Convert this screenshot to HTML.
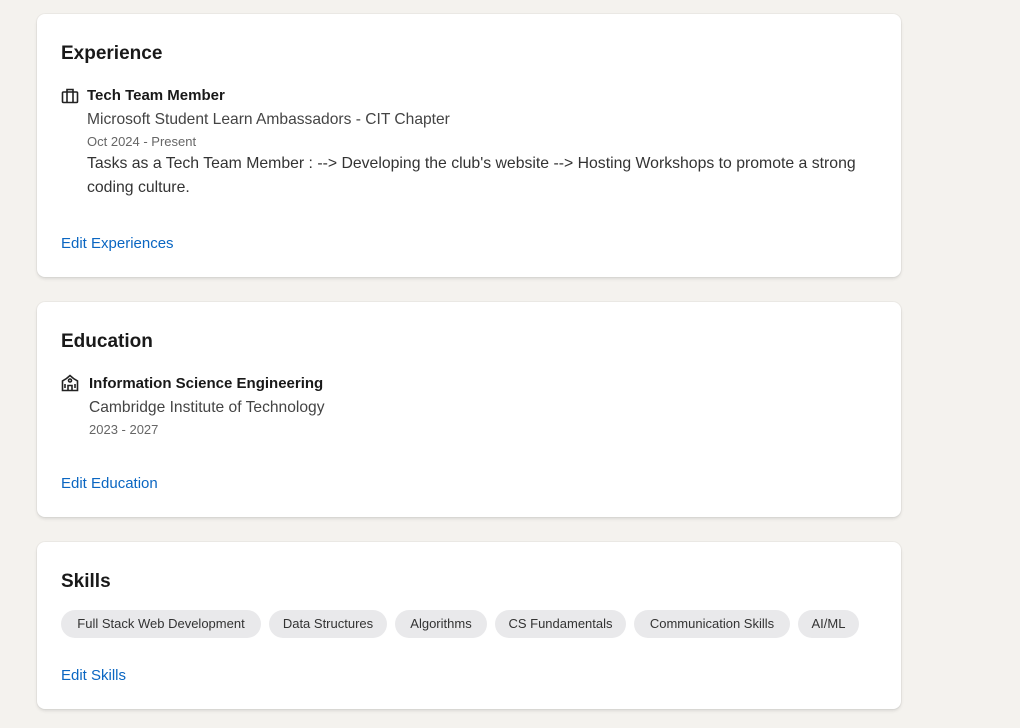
<!DOCTYPE html>
<html><head><meta charset="utf-8"><style>
*{margin:0;padding:0;box-sizing:border-box}
body{width:1020px;height:728px;background:#f4f2ee;font-family:"Liberation Sans",sans-serif;position:relative;overflow:hidden;color:#1d1d1d}
.card{position:absolute;left:37px;width:864px;background:#fff;border-radius:8px;box-shadow:0 0 0 1px rgba(0,0,0,.03),0 2px 3px rgba(0,0,0,.1)}
.a{position:absolute;white-space:nowrap}
h2{font-size:19px;font-weight:bold;color:#191919}
.t{font-size:15px;font-weight:bold;color:#191919}
.s{font-size:15.6px;color:#444}
.d{font-size:13px;color:#666}
.p{font-size:15.8px;color:#333}
.l{font-size:15px;color:#0a66c2}
.chip{position:absolute;top:68px;height:28px;border-radius:14px;background:#e9e9eb;font-size:13px;color:#333;line-height:28px;text-align:center}
svg{position:absolute}
</style></head><body>
<div class="card" style="top:14px;height:263px">
<h2 class="a" style="left:24px;top:29px">Experience</h2>
<svg style="left:24px;top:74px" width="18" height="16" viewBox="0 0 18 16" fill="none" stroke="#222" stroke-width="1.6"><rect x="1.5" y="4" width="15" height="10.5" rx="1"/><path d="M6 4V1.5h6V4M6 4v10.5M12 4v10.5"/></svg>
<div class="a t" style="left:50px;top:73px">Tech Team Member</div>
<div class="a s" style="left:50px;top:97px">Microsoft Student Learn Ambassadors - CIT Chapter</div>
<div class="a d" style="left:50px;top:120px">Oct 2024 - Present</div>
<div class="a p" style="left:50px;top:141px">Tasks as a Tech Team Member : --&gt; Developing the club's website --&gt; Hosting Workshops to promote a strong</div>
<div class="a p" style="left:50px;top:165px">coding culture.</div>
<div class="a l" style="left:24px;top:221px">Edit Experiences</div>
</div>
<div class="card" style="top:302px;height:215px">
<h2 class="a" style="left:24px;top:29px">Education</h2>
<svg style="left:24px;top:72px" width="18" height="18" viewBox="0 0 18 18" fill="none" stroke="#222" stroke-width="1.6"><path d="M1.5 16.5V7l4-2.5L9 1.5l3.5 3L16.5 7v9.5z"/><circle cx="9" cy="6.5" r="1.5"/><path d="M7 16.5v-5h4v5M4 10v4M14 10v4"/></svg>
<div class="a t" style="left:52px;top:73px">Information Science Engineering</div>
<div class="a s" style="left:52px;top:97px">Cambridge Institute of Technology</div>
<div class="a d" style="left:52px;top:120px">2023 - 2027</div>
<div class="a l" style="left:24px;top:173px">Edit Education</div>
</div>
<div class="card" style="top:542px;height:167px">
<h2 class="a" style="left:24px;top:29px">Skills</h2>
<div class="chip" style="left:24px;width:200px">Full Stack Web Development</div>
<div class="chip" style="left:232px;width:118px">Data Structures</div>
<div class="chip" style="left:358px;width:92px">Algorithms</div>
<div class="chip" style="left:458px;width:131px">CS Fundamentals</div>
<div class="chip" style="left:597px;width:156px">Communication Skills</div>
<div class="chip" style="left:761px;width:61px">AI/ML</div>
<div class="a l" style="left:24px;top:125px">Edit Skills</div>
</div>
</body></html>
